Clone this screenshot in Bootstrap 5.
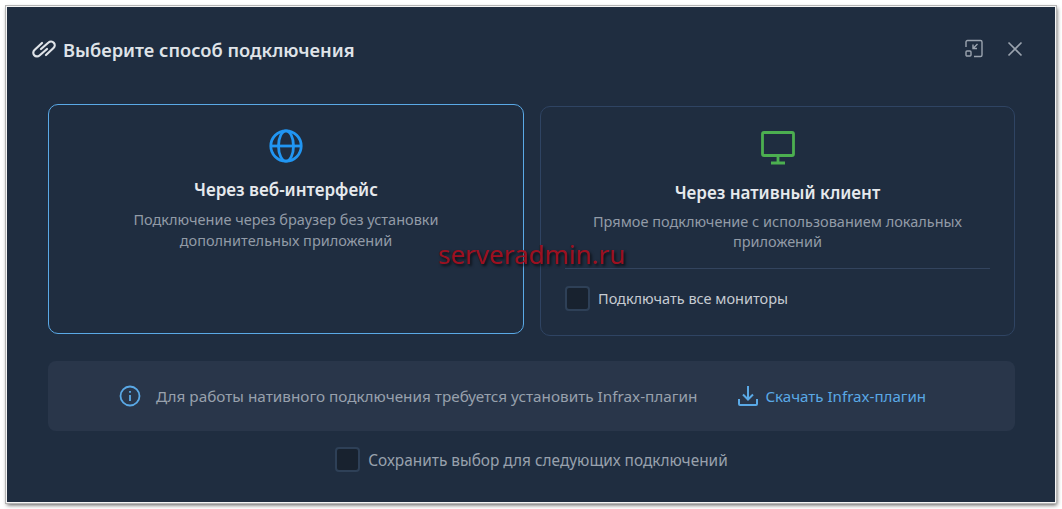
<!DOCTYPE html>
<html lang="ru">
<head>
<meta charset="utf-8">
<title>Выберите способ подключения</title>
<link href="https://cdn.jsdelivr.net/npm/bootstrap@5.3.0/dist/css/bootstrap.min.css" rel="stylesheet">
<style>
html,body{height:100%}
body{background:#fff;margin:0;overflow:hidden;font-family:"Noto Sans","Open Sans",sans-serif;padding:6px;width:1062px;height:509px}
.shell{position:relative;height:497px;width:1050px;background:#1f2d40;border:1px solid #f4f4f4;box-shadow:0 0 0 1px #b5b5b5,1px 2px 4px #555;padding:0 40px 0 41px}
.head-row{height:97px;padding-top:24px;margin-left:-17px;margin-right:-10px}
.head-title{font-size:18.300px;font-weight:600;color:#dfe3e8;margin:0 0 0 2px;line-height:38px}
.tool-btn{color:#9aa3ae;background:none;border:0;padding:0;line-height:0}
.tool-gap{margin-right:21px}
.mode-grid{display:grid;grid-template-columns:476px 475px;gap:16px;height:230px}
.mode-tile{border:1px solid #2f4463;border-radius:10px;text-align:center;background:#1f2d40;padding:23px 24px 0;height:230px}
.mode-tile.picked{border-color:#5aa9e6}
.mode-tile.other{margin-top:2px}
.tile-name{font-size:17px;font-weight:600;color:#e6e9ed;line-height:22px;margin:15px 0 8px}
.mode-tile.other .tile-name{margin:16px 0 7px}
.tile-desc{font-size:14.500px;color:#929ba7;line-height:20.500px;margin:0}
.mode-tile.other .tile-desc{line-height:20px}
.tile-rule{border-top:1px solid #33445e;margin-top:17px;padding-top:17px;color:#c6cbd2;font-size:14.500px}
.box-mark{width:25px;height:25px;border:2px solid #2e4057;border-radius:4px;background:#18222f;flex:none}
.notice{background:#29364a;border-radius:8px;height:70px;margin-top:27px;padding-right:18px;color:#98a1ad;font-size:15.300px}
.notice-icon{margin-right:15px}
.get-link{color:#5aa9e6;text-decoration:none;margin-left:40px;font-size:15.100px;gap:6px}
.save-row{margin-top:16px;color:#98a1ad;font-size:15.400px;height:25px}
.save-label{padding-top:2px}
.stamp{position:absolute;left:431px;top:232px;color:#9c1020;font-size:26px;line-height:30px;font-family:"Noto Sans",sans-serif;text-shadow:2px 2px 3px rgba(0,0,0,.7)}
</style>
</head>
<body>
<div class="shell">
  <div class="head-row d-flex align-items-start">
    <svg width="26" height="20" viewBox="0 0 26 20" fill="none" stroke="#dfe3e8" stroke-width="2.200" stroke-linecap="round" class="me-1 mt-2"><path d="M11 4 3.500 11a3.700 3.700 0 0 0 5 5.500L16 10"/><path d="M15 16l7.500-7a3.700 3.700 0 0 0-5-5.500L10 10"/></svg>
    <h5 class="head-title flex-grow-1">Выберите способ подключения</h5>
    <button class="tool-btn tool-gap mt-2" type="button" aria-label="Свернуть"><svg width="20" height="20" viewBox="0 0 20 20" fill="none" stroke="currentColor" stroke-width="1.400"><path d="M2 8V3a1.500 1.500 0 0 1 1.500-1.500h13A1.500 1.500 0 0 1 18 3v13a1.500 1.500 0 0 1-1.500 1.500H10"/><rect x="2" y="12" width="5" height="5" rx="1"/><path d="M13.500 5 9 9.500M9 5.500v4h4"/></svg></button>
    <button class="tool-btn mt-2" type="button" aria-label="Закрыть"><svg width="20" height="20" viewBox="0 0 20 20" fill="none" stroke="currentColor" stroke-width="1.600"><path d="M3.500 3.500l13 13M16.500 3.500l-13 13"/></svg></button>
  </div>
  <div class="mode-grid">
    <div class="mode-tile picked">
      <svg width="36" height="36" viewBox="0 0 36 36" fill="none" stroke="#2196f3" stroke-width="2.800"><circle cx="18" cy="18" r="15.200"/><ellipse cx="18" cy="18" rx="7.500" ry="15.200"/><path d="M3 18h30"/></svg>
      <div class="tile-name">Через веб-интерфейс</div>
      <p class="tile-desc">Подключение через браузер без установки<br>дополнительных приложений</p>
    </div>
    <div class="mode-tile other">
      <svg width="36" height="36" viewBox="0 0 36 36" fill="none" stroke="#4caf50" stroke-width="2.800"><rect x="2.500" y="2.500" width="31" height="23" rx="1.500"/><path d="M18 26v7M11 33h14"/></svg>
      <div class="tile-name">Через нативный клиент</div>
      <p class="tile-desc">Прямое подключение с использованием локальных<br>приложений</p>
      <div class="tile-rule d-flex align-items-center gap-2">
        <span class="box-mark"></span><span>Подключать все мониторы</span>
      </div>
    </div>
  </div>
  <div class="notice d-flex align-items-center justify-content-center">
    <svg width="22" height="22" viewBox="0 0 22 22" fill="none" stroke="#5aa9e6" stroke-width="1.800" class="notice-icon"><circle cx="11" cy="11" r="9.500"/><path d="M11 10v6M11 6v1.800"/></svg>
    <span>Для работы нативного подключения требуется установить Infrax-плагин</span>
    <a href="#" class="get-link d-inline-flex align-items-center">
      <svg width="22" height="22" viewBox="0 0 22 22" fill="none" stroke="#5aa9e6" stroke-width="2"><path d="M11 1v13M6 9.500l5 5 5-5M2 14v5a1 1 0 0 0 1 1h16a1 1 0 0 0 1-1v-5"/></svg>
      Скачать Infrax-плагин
    </a>
  </div>
  <div class="save-row d-flex align-items-center justify-content-center gap-2">
    <span class="box-mark"></span><span class="save-label">Сохранить выбор для следующих подключений</span>
  </div>
  <div class="stamp">serveradmin.ru</div>
</div>
<script src="https://cdn.jsdelivr.net/npm/bootstrap@5.3.0/dist/js/bootstrap.bundle.min.js"></script>
</body>
</html>
